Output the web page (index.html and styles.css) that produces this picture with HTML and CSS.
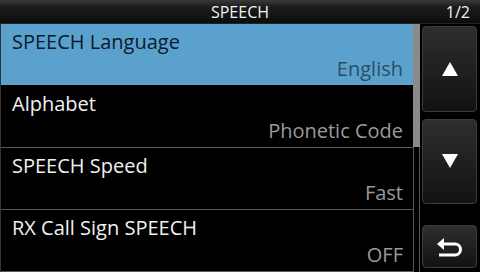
FILE: index.html
```html
<!DOCTYPE html>
<html>
<head>
<meta charset="utf-8">
<link rel="stylesheet" href="styles.css">
</head>
<body>
<div class="screen">
  <header class="titlebar">
    <span class="title">SPEECH</span>
    <span class="page">1/2</span>
  </header>
  <div class="main">
    <ul class="list">
      <li class="row selected"><span class="label">SPEECH Language</span><span class="value">English</span></li>
      <li class="row"><span class="label">Alphabet</span><span class="value">Phonetic Code</span></li>
      <li class="row"><span class="label">SPEECH Speed</span><span class="value">Fast</span></li>
      <li class="row"><span class="label">RX Call Sign SPEECH</span><span class="value">OFF</span></li>
    </ul>
    <div class="scrollbar"><div class="thumb"></div></div>
    <div class="buttons">
      <div class="btn btn-up">
        <svg width="16" height="14" viewBox="0 0 16 14"><polygon points="8,0 16,14 0,14" fill="#fff"/></svg>
      </div>
      <div class="btn btn-down">
        <svg width="16" height="14" viewBox="0 0 16 14"><polygon points="0,0 16,0 8,14" fill="#fff"/></svg>
      </div>
      <div class="btn btn-back">
        <svg width="28" height="22" viewBox="0 0 28 22"><path d="M5 8 H19 a5.5 5.5 0 0 1 0 11 H3" fill="none" stroke="#fff" stroke-width="3"/><polygon points="1,8 8,2 8,14" fill="#fff"/></svg>
      </div>
    </div>
  </div>
</div>
</body>
</html>
```
FILE: styles.css
```css
* { box-sizing: border-box; }
html, body { margin: 0; padding: 0; background: #000; }
.screen {
  width: 480px;
  height: 272px;
  background: #000;
  font-family: "Open Sans", "Noto Sans", sans-serif;
  overflow: hidden;
  display: flex;
  flex-direction: column;
}
.titlebar {
  height: 24px;
  flex: none;
  position: relative;
  display: flex;
  align-items: center;
  justify-content: center;
  background: linear-gradient(#3a3a3a 0%, #1c1c1c 30%, #0c0c0c 100%);
  border-bottom: 1px solid #222;
  color: #f2f2f2;
  font-size: 16px;
}
.title { line-height: 24px; }
.page {
  position: absolute;
  right: 10px;
  top: 0;
  line-height: 24px;
}
.main {
  flex: 1;
  display: flex;
  min-height: 0;
}
.list {
  list-style: none;
  margin: 0;
  padding: 0;
  width: 413px;
  border-left: 1px solid #333;
}
.row {
  height: 62px;
  border-bottom: 1px solid #5a5a5a;
  display: flex;
  flex-direction: column;
  padding: 5px 10px 0 11px;
  font-size: 20px;
  line-height: 26px;
}
.label { color: #f0f0f0; }
.value { color: #9a9a9a; text-align: right; margin-top: 1px; }
.row.selected {
  background: #5aa2cd;
  border-bottom-color: #000;
}
.row.selected .label { color: #0b1a2a; }
.row.selected .value { color: #2b4d64; }
.scrollbar {
  width: 7px;
  border-left: 1px solid #555;
  border-right: 1px solid #555;
  flex: none;
}
.thumb {
  height: 123px;
  background: #8a8a8a;
  margin: 0 -1px;
}
.buttons {
  flex: none;
  width: 60px;
  padding: 2px 3px 4px 2px;
  display: flex;
  flex-direction: column;
}
.btn {
  border: 1px solid #3c3c3c;
  border-radius: 4px;
  background: linear-gradient(#2e2e2e, #121212);
  display: flex;
  align-items: center;
  justify-content: center;
}
.btn-up { height: 86px; }
.btn-down { height: 86px; margin-top: 7px; }
.btn-back { height: 43px; margin-top: 21px; }
```
